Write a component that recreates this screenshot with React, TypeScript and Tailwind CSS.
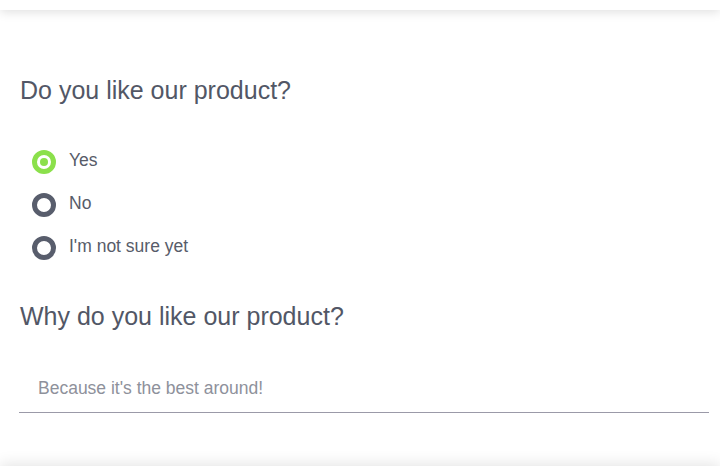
import React from "react";

const options = [
  { label: "Yes", checked: true },
  { label: "No", checked: false },
  { label: "I'm not sure yet", checked: false },
];

function Radio({ checked }: { checked: boolean }) {
  return (
    <span
      className={
        "flex h-[24px] w-[24px] shrink-0 items-center justify-center rounded-full border-[5px] " +
        (checked ? "border-[#8be04b]" : "border-[#585d6c]")
      }
    >
      {checked && <span className="h-[8px] w-[8px] rounded-full bg-[#8be04b]" />}
    </span>
  );
}

export default function App() {
  return (
    <div
      className="relative flex h-[476px] w-full flex-col overflow-hidden bg-white"
      style={{ fontFamily: '"Liberation Sans", Arial, sans-serif' }}
    >
      <div className="absolute left-0 right-0 top-[-40px] h-[50px] bg-white shadow-[0_2px_10px_rgba(0,0,0,0.13)]" />
      <div className="flex flex-col px-[20px] pt-[75px]">
        <h2 className="text-[25px] leading-[30px] text-[#525766]">Do you like our product?</h2>
        <div className="mt-[35px] flex flex-col pl-[12px]">
          {options.map((o) => (
            <label key={o.label} className="flex h-[43px] items-center gap-[13px]">
              <Radio checked={o.checked} />
              <span className="relative top-[-1px] text-[17.5px] text-[#575c69]">{o.label}</span>
            </label>
          ))}
        </div>
        <h2 className="mt-[32px] text-[25px] leading-[30px] text-[#525766]">
          Why do you like our product?
        </h2>
        <div className="mt-[32px] ml-[-1px] mr-[-9px] flex h-[50px] items-center border-b border-[#9b9aa8] pl-[19px] pt-[2px]">
          <span className="text-[17.5px] text-[#8e919b]">Because it's the best around!</span>
        </div>
      </div>
      <div className="absolute left-0 right-0 top-[466px] h-[60px] bg-white shadow-[0_-2px_14px_rgba(0,0,0,0.11)]" />
    </div>
  );
}
